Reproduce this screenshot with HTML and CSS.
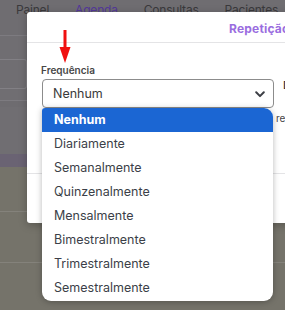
FILE: index.html
```html
<!DOCTYPE html>
<html lang="pt">
<head>
<meta charset="utf-8">
<link rel="stylesheet" href="styles.css">
</head>
<body>
<div class="page">
  <nav class="nav">
    <span class="nav-item">Painel</span>
    <span class="nav-item active">Agenda</span>
    <span class="nav-item">Consultas</span>
    <span class="nav-item">Pacientes</span>
  </nav>
  <div class="bg-field"></div>
  <div class="bg-row"></div>
  <div class="bg-strip"></div>
  <div class="bg-lower">
    <div class="bg-line"></div>
    <div class="bg-line"></div>
  </div>
</div>

<div class="modal">
  <div class="modal-header"><span class="modal-title">Repetição</span></div>
  <div class="modal-body">
    <div class="field">
      <label class="label">Frequência</label>
      <div class="select"><span>Nenhum</span>
        <svg class="chev" width="10" height="7" viewBox="0 0 10 7"><path d="M1.2 1.3 5 5.1 8.8 1.3" fill="none" stroke="#3c3f45" stroke-width="2" stroke-linecap="round" stroke-linejoin="round"/></svg>
      </div>
    </div>
    <div class="field second">
      <label class="label plain">D</label>
      <div class="hint">re</div>
    </div>
  </div>
  <div class="modal-footer"></div>
</div>

<svg class="arrow" width="12" height="34" viewBox="0 0 12 34"><rect x="4.5" y="0" width="3" height="19" fill="#f01010"/><polygon points="0.5,17 11.5,17 6,33" fill="#f01010"/></svg>

<ul class="dropdown">
  <li class="opt selected">Nenhum</li>
  <li class="opt">Diariamente</li>
  <li class="opt">Semanalmente</li>
  <li class="opt">Quinzenalmente</li>
  <li class="opt">Mensalmente</li>
  <li class="opt">Bimestralmente</li>
  <li class="opt">Trimestralmente</li>
  <li class="opt">Semestralmente</li>
</ul>
</body>
</html>
```
FILE: styles.css
```css
* { box-sizing: border-box; }
html, body { margin: 0; padding: 0; }
body {
  width: 285px;
  height: 310px;
  overflow: hidden;
  position: relative;
  font-family: Inter, "Noto Sans", sans-serif;
  background: #75736a;
}
.page { display: flex; flex-direction: column; }
.nav {
  height: 36px;
  background: #6f6d71;
  border-bottom: 1px solid #7d7b80;
  display: flex;
  gap: 26px;
  padding: 0 0 0 16px;
  font-size: 12px;
  letter-spacing: -0.2px;
  line-height: 18px;
  color: #3a393c;
}
.nav-item { margin-top: 1px; }
.nav-item.active { color: #54389a; }
.bg-field {
  height: 65px;
  background: #706e72;
  padding-top: 23px;
  border-bottom: 1px solid #7d7b80;
  position: relative;
}
.bg-field::before {
  content: "";
  display: block;
  width: 26px;
  height: 28px;
  border: 1px solid #828085;
  border-left: 0;
  border-radius: 0 3px 3px 0;
}
.bg-row {
  height: 53px;
  background: #706e72;
  border-top: 6px solid #6e6c70;
  border-bottom: 0;
}
.bg-strip { height: 13px; background: #6a6373; }
.bg-lower { display: flex; flex-direction: column; padding-top: 44px; gap: 50px; }
.bg-line { height: 1px; background: #84827b; }

.modal {
  position: absolute;
  left: 27px;
  top: 12px;
  width: 300px;
  height: 211px;
  background: #fff;
  border-radius: 3px;
  box-shadow: 0 2px 8px rgba(0,0,0,0.25);
  display: flex;
  flex-direction: column;
}
.modal-header {
  height: 31px;
  border-bottom: 1px solid #e4e4e6;
  padding: 5px 0 0 202px;
}
.modal-title {
  font-size: 12px;
  font-weight: 700;
  color: #9a6de0;
  letter-spacing: 0.2px;
  white-space: nowrap;
}
.modal-body {
  display: flex;
  gap: 9px;
  padding: 21px 0 0 14px;
  height: 131px;
  border-bottom: 1px solid #e4e4e6;
}
.field { display: flex; flex-direction: column; }
.label {
  font-size: 10px;
  font-weight: 600;
  color: #474747;
  line-height: 12px;
  margin-bottom: 3px;
}
.label.plain { margin-top: 15px; font-size: 11px; font-weight: 500; color: #333; }
.hint { font-size: 10px; color: #444; margin-top: 18px; margin-left: -7px; }
.select {
  width: 232px;
  height: 29px;
  margin-left: 1px;
  border: 1px solid #8c8c8c;
  border-radius: 4px;
  display: flex;
  align-items: center;
  justify-content: space-between;
  padding: 0 8px 0 10px;
  font-size: 12.5px;
  color: #3a3a3a;
}
.chev { margin-top: 1px; }

.arrow { position: absolute; left: 59px; top: 30px; }

.dropdown {
  position: absolute;
  left: 42px;
  top: 108px;
  width: 231px;
  margin: 0;
  padding: 0;
  list-style: none;
  background: #fff;
  border-radius: 3px 9px 9px 9px;
  overflow: hidden;
  box-shadow: 0 1px 6px rgba(0,0,0,0.28);
  padding-bottom: 1px;
}
.opt {
  height: 24px;
  line-height: 24px;
  padding-left: 12px;
  font-size: 12.5px;
  color: #3b3f48;
}
.opt.selected { background: #1b66d3; color: #fff; font-weight: 700; }
```
